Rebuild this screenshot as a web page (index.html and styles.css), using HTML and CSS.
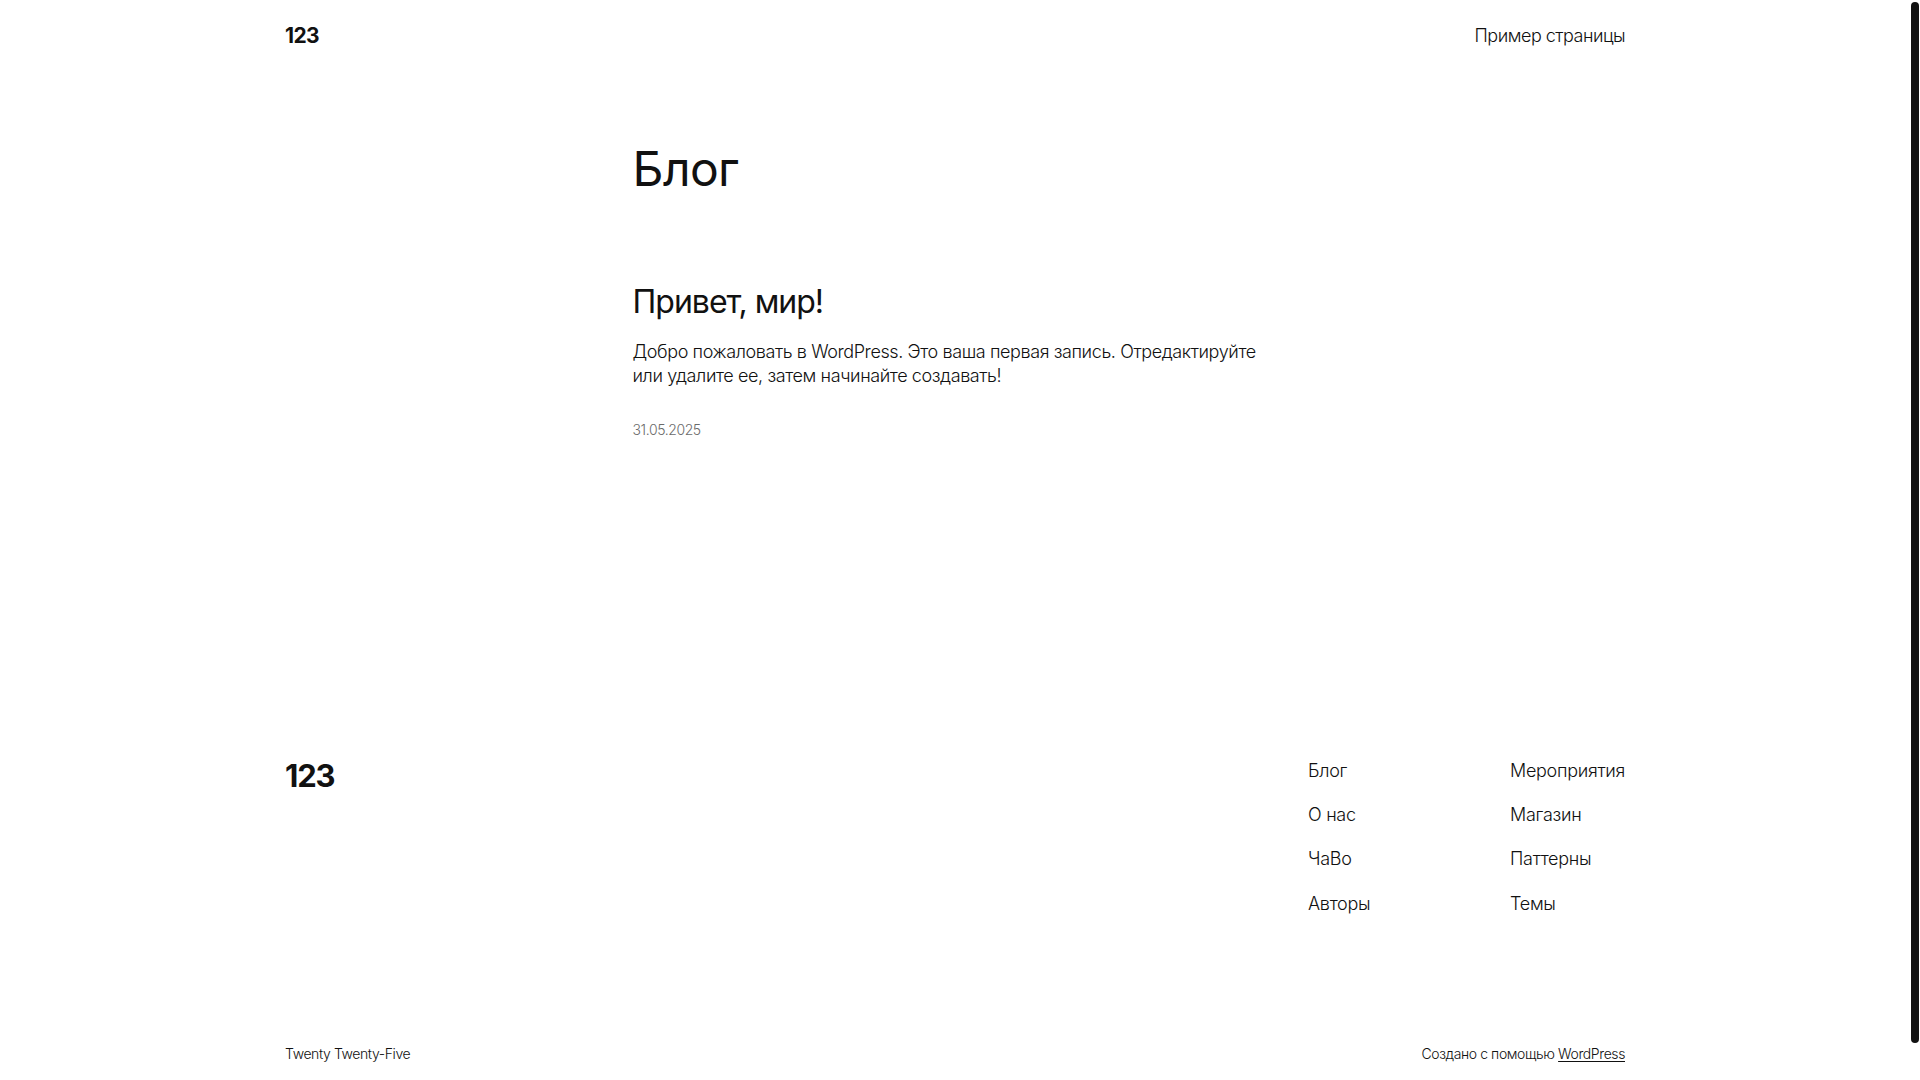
FILE: index.html
```html
<!DOCTYPE html>
<html lang="ru">
<head>
    <meta charset="UTF-8">
    <meta name="viewport" content="width=device-width, initial-scale=1.0">
    <title>Блог – 123</title>
    <link rel="stylesheet" href="styles.css">
</head>
<body>
    <header class="site-header">
        <div class="wide row">
            <a href="#" class="site-title">123</a>
            <nav class="header-nav">
                <a href="#">Пример страницы</a>
            </nav>
        </div>
    </header>

    <main class="site-main">
        <div class="content">
            <h1 class="page-title">Блог</h1>

            <article class="post">
                <h2 class="post-title"><a href="#">Привет, мир!</a></h2>
                <p class="post-excerpt">Добро пожаловать в WordPress. Это ваша первая запись. Отредактируйте или удалите ее, затем начинайте создавать!</p>
                <time class="post-date" datetime="2025-05-31">31.05.2025</time>
            </article>
        </div>
    </main>

    <footer class="site-footer">
        <div class="wide">
            <div class="footer-top">
                <a href="#" class="footer-title">123</a>
                <div class="footer-menus">
                    <ul class="footer-nav">
                        <li><a href="#">Блог</a></li>
                        <li><a href="#">О нас</a></li>
                        <li><a href="#">ЧаВо</a></li>
                        <li><a href="#">Авторы</a></li>
                    </ul>
                    <ul class="footer-nav">
                        <li><a href="#">Мероприятия</a></li>
                        <li><a href="#">Магазин</a></li>
                        <li><a href="#">Паттерны</a></li>
                        <li><a href="#">Темы</a></li>
                    </ul>
                </div>
            </div>
            <div class="footer-bottom">
                <span>Twenty Twenty-Five</span>
                <span>Создано с помощью <a href="#" class="underline">WordPress</a></span>
            </div>
        </div>
    </footer>

    <div class="scroll-thumb"></div>
</body>
</html>
```

FILE: styles.css
```css
html {
    background: #fff;
}
body {
    margin: 0 10px 0 0;
    font-family: Inter, "Noto Sans", sans-serif;
    font-size: 18px;
    font-weight: 300;
    line-height: 1.4;
    letter-spacing: -0.1px;
    color: #111;
    background: #fff;
}
a {
    color: inherit;
    text-decoration: none;
}
.wide {
    max-width: 1340px;
    margin: 0 auto;
}
.content {
    max-width: 645px;
    margin: 0 auto;
}
.row {
    display: flex;
    justify-content: space-between;
    align-items: center;
}

/* scrollbar look-alike */
.scroll-thumb {
    position: fixed;
    top: 2px;
    right: 1px;
    width: 8px;
    height: 1041px;
    background: #111;
    border-radius: 4px;
}

/* header */
.site-header {
    padding: 21px 0;
}
.site-title {
    font-size: 21px;
    font-weight: 700;
    letter-spacing: -0.6px;
}
.header-nav a {
    letter-spacing: -0.5px;
}

/* main */
.site-main {
    padding-top: 71px;
}
.page-title {
    margin: 0;
    font-size: 48px;
    font-weight: 400;
    line-height: 1.125;
    letter-spacing: -0.6px;
}
.post {
    margin-top: 88px;
}
.post-title {
    margin: 0;
    font-size: 32px;
    font-weight: 400;
    line-height: 1.125;
    letter-spacing: -1px;
}
.post-excerpt {
    margin: 20px 0 0;
    line-height: 24px;
    letter-spacing: -0.4px;
}
.post-date {
    display: block;
    margin-top: 32px;
    font-size: 14px;
    color: #6b6b6b;
    letter-spacing: -0.4px;
}

/* footer */
.site-footer {
    margin-top: 318px;
    padding-bottom: 55px;
}
.footer-top {
    display: flex;
    justify-content: space-between;
    align-items: flex-start;
}
.footer-title {
    font-size: 31px;
    font-weight: 700;
    line-height: 1.16;
    letter-spacing: -1.2px;
}
.footer-menus {
    display: grid;
    grid-template-columns: 202px auto;
}
.footer-nav {
    list-style: none;
    margin: 0;
    padding: 0;
    display: flex;
    flex-direction: column;
    gap: 19px;
}
.footer-nav a {
    letter-spacing: -0.3px;
}
.footer-bottom {
    display: flex;
    justify-content: space-between;
    margin-top: 128px;
    font-size: 14px;
    letter-spacing: -0.4px;
}
.underline {
    text-decoration: underline;
    text-underline-offset: 2px;
}
```
